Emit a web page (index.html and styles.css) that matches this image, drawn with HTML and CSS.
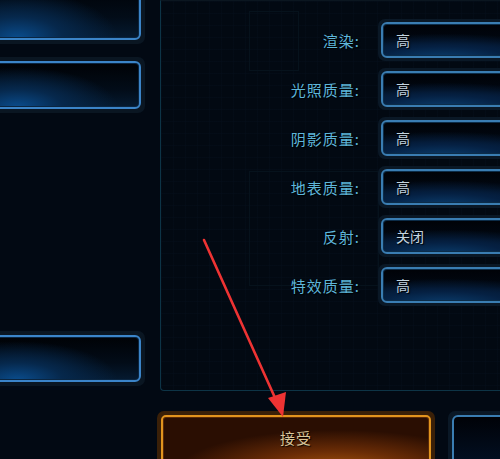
FILE: index.html
```html
<!DOCTYPE html>
<html lang="zh">
<head>
<meta charset="utf-8">
<link rel="stylesheet" href="styles.css">
</head>
<body>
<div class="screen">
  <div class="main">
    <div class="side">
      <div class="frame side-frame first"><div class="btn side-btn"></div></div>
      <div class="frame side-frame second"><div class="btn side-btn"></div></div>
      <div class="frame side-frame third"><div class="btn side-btn"></div></div>
    </div>
    <div class="panel">
      <div class="deco deco-a"></div>
      <div class="deco deco-b"></div>
      <div class="rows">
        <div class="row"><span class="label">渲染:</span><div class="frame box-frame"><div class="box">高</div></div></div>
        <div class="row"><span class="label">光照质量:</span><div class="frame box-frame"><div class="box">高</div></div></div>
        <div class="row"><span class="label">阴影质量:</span><div class="frame box-frame"><div class="box">高</div></div></div>
        <div class="row"><span class="label">地表质量:</span><div class="frame box-frame"><div class="box">高</div></div></div>
        <div class="row"><span class="label">反射:</span><div class="frame box-frame"><div class="box">关闭</div></div></div>
        <div class="row"><span class="label">特效质量:</span><div class="frame box-frame"><div class="box">高</div></div></div>
      </div>
    </div>
  </div>
  <div class="bottom">
    <div class="frame accept-frame"><div class="accept">接受</div></div>
    <div class="frame cancel-frame"><div class="cancel"></div></div>
  </div>
  <svg class="arrow" width="500" height="459" viewBox="0 0 500 459">
    <line x1="204" y1="240" x2="276" y2="400" stroke="#ee3333" stroke-width="2.6" stroke-linecap="round"/>
    <polygon points="283,417 268,398 286,392" fill="#ee3333"/>
  </svg>
</div>
</body>
</html>
```

FILE: styles.css
```css
* { box-sizing: border-box; }
html, body { margin: 0; padding: 0; background: #020913; }
.screen {
  width: 500px;
  height: 459px;
  position: relative;
  overflow: hidden;
  background-color: #020913;
  font-family: "Noto Sans CJK SC", "Noto Sans", sans-serif;
}
.main {
  display: flex;
  height: 391px;
}
.side {
  width: 160px;
  flex: none;
  display: flex;
  flex-direction: column;
}
.frame {
  background: #0a1622;
  border-radius: 7px;
  padding: 3px;
  flex: none;
}
.side-frame {
  width: 155px;
  margin-left: -10px;
  padding: 4px;
}
.side-frame.first { margin-top: -20px; height: 64px; }
.side-frame.second { margin-top: 13px; height: 56px; }
.side-frame.third { margin-top: 218px; height: 55px; }
.side-btn {
  height: 100%;
  border: 2px solid #3b84c8;
  border-radius: 6px;
  box-shadow: inset 0 0 0 1px #0a2540;
  background:
    radial-gradient(ellipse 70% 90% at 15% 100%, #0a4c8c 0%, #06284c 45%, rgba(2,10,20,0) 100%),
    linear-gradient(to bottom, #000206 0%, #020c18 60%, #051a30 100%);
}
.panel {
  flex: 1;
  position: relative;
  border-left: 1px solid #0d3446;
  border-bottom: 1px solid #0d3446;
  border-top: 1px solid #0b1620;
  border-bottom-left-radius: 4px;
  background-color: #020912;
  background-image:
    linear-gradient(to right, rgba(20,50,70,0.08) 1px, transparent 1px),
    linear-gradient(to bottom, rgba(20,50,70,0.08) 1px, transparent 1px);
  background-size: 12px 12px;
}
.deco {
  position: absolute;
  border: 1px solid #06121c;
}
.deco-a { left: 88px; top: 10px; width: 50px; height: 60px; }
.deco-b { left: 88px; top: 170px; width: 130px; height: 115px; }
.rows {
  position: relative;
  padding-top: 18px;
  display: flex;
  flex-direction: column;
  gap: 7px;
}
.row {
  display: grid;
  grid-template-columns: 199px 160px;
  column-gap: 18px;
  align-items: center;
}
.label {
  text-align: right;
  color: #5eb6da;
  font-size: 15px;
  letter-spacing: 1px;
  text-shadow: 1px 1px 1px #000;
}
.box-frame {
  height: 42px;
  padding: 3px;
  background: #0a1826;
}
.box {
  height: 100%;
  border: 2px solid #3a7db2;
  border-radius: 6px;
  box-shadow: inset 0 0 0 1px #0c2c48;
  background:
    radial-gradient(ellipse 90% 80% at 40% 110%, #0b3e6e 0%, #052042 50%, rgba(0,0,0,0) 100%),
    linear-gradient(to bottom, #000207 0%, #010812 55%, #062040 100%);
  color: #c3d3df;
  font-size: 14px;
  line-height: 32px;
  padding-left: 13px;
  text-shadow: 1px 1px 1px #000;
}
.bottom {
  display: flex;
  gap: 13px;
  padding-left: 157px;
  margin-top: 20px;
}
.accept-frame {
  width: 278px;
  height: 60px;
  padding: 4px;
  background: #3a2008;
}
.accept {
  height: 100%;
  border: 2px solid #e2941e;
  border-radius: 5px;
  box-shadow: inset 0 0 0 1px #5a2a06;
  background:
    radial-gradient(ellipse 75% 110% at 65% 115%, #b05a0c 0%, #6a2c06 40%, #2a0e02 80%),
    #1c0802;
  color: #d9c59a;
  font-size: 15px;
  letter-spacing: 1px;
  text-align: center;
  padding-top: 10px;
  line-height: 22px;
  text-shadow: 1px 1px 1px #000;
}
.cancel-frame {
  width: 80px;
  height: 60px;
  padding: 4px;
  background: #0a1826;
}
.cancel {
  height: 100%;
  border: 2px solid #3a7db2;
  border-radius: 6px;
  background: linear-gradient(to bottom, #000207 0%, #021024 100%);
}
.arrow {
  position: absolute;
  left: 0;
  top: 0;
  pointer-events: none;
}
```
